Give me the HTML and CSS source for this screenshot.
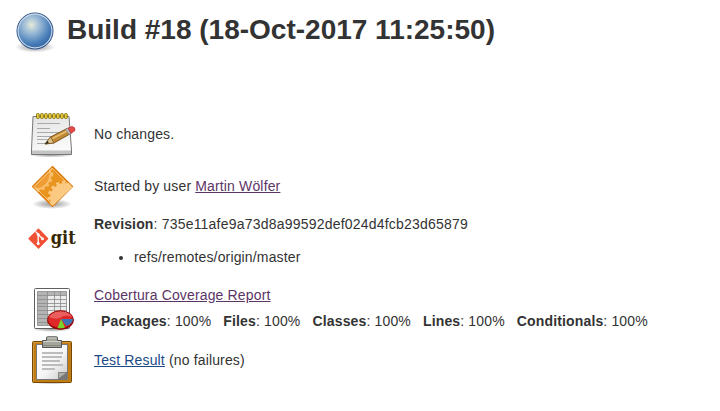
FILE: index.html
```
<!DOCTYPE html>
<html lang="en">
<head>
<meta charset="utf-8">
<title>Build #18</title>
<link rel="stylesheet" href="styles.css">
</head>
<body>
<main>
  <h1 class="title">
    <svg class="ball" viewBox="0 0 48 48">
      <defs>
        <radialGradient id="blue" cx=".4" cy=".33" r=".68"><stop offset="0" stop-color="#e6ebd8"/><stop offset=".3" stop-color="#a3c0d8"/><stop offset=".75" stop-color="#4a7fb9"/><stop offset="1" stop-color="#3465a4"/></radialGradient>
        <radialGradient id="shade"><stop offset="0" stop-color="#000" stop-opacity=".4"/><stop offset=".6" stop-color="#000" stop-opacity=".18"/><stop offset="1" stop-color="#000" stop-opacity="0"/></radialGradient>
      </defs>
      <ellipse cx="24" cy="41" rx="20" ry="5.500" fill="url(#shade)"/>
      <circle cx="24" cy="25" r="18" fill="url(#blue)" stroke="#2b4f84"/>
      <circle cx="24" cy="25" r="16.900" fill="none" stroke="#c9d8e8" stroke-width="1.100"/>
    </svg>
    <span class="title-text">Build #18 (18-Oct-2017 11:25:50)</span>
  </h1>

  <section class="summary">
    <div class="row">
      <svg class="icon" viewBox="0 0 48 48">
        <defs><linearGradient id="paper" x2=".3" y2="1"><stop stop-color="#e2e2e2"/><stop offset="1" stop-color="#fafafa"/></linearGradient></defs>
        <ellipse cx="23" cy="45" rx="22" ry="2.500" fill="url(#shade)"/>
        <path d="M5 6.500H41L43.500 40V44.500H3.500V40Z" fill="url(#paper)" stroke="#777"/>
        <path d="M4 40.500H43V44H4Z" fill="#c4c4c4"/>
        <path d="M9 13.500H32M9 18.500H22M9 22.500H35M9 26.500H30M9 29.500H26M9 33.500H21" stroke="#aaa"/>
        <g fill="#e5ca3c" stroke="#85700c" stroke-width=".9"><rect x="8.500" y="3.500" width="2.800" height="5" rx="1"/><rect x="12.500" y="3.500" width="2.800" height="5" rx="1"/><rect x="16.500" y="3.500" width="2.800" height="5" rx="1"/><rect x="20.500" y="3.500" width="2.800" height="5" rx="1"/><rect x="24.500" y="3.500" width="2.800" height="5" rx="1"/><rect x="28.500" y="3.500" width="2.800" height="5" rx="1"/><rect x="32.500" y="3.500" width="2.800" height="5" rx="1"/><rect x="36.500" y="3.500" width="2.800" height="5" rx="1"/></g>
        <path d="M17 34L22.500 27 39 18.500 42 24 26 33Z" fill="#c08a35" stroke="#6b4310" stroke-width=".8"/>
        <path d="M24.500 28.500L40 20.500" stroke="#e5bd70" stroke-width="1.600"/>
        <path d="M17 34L22.500 27 26 33Z" fill="#dec28d" stroke="#6b4310" stroke-width=".6"/>
        <path d="M17 34L19.500 31 21 33.200Z" fill="#222"/>
        <path d="M37.500 19.500L40 18 43 23.500 41 24.500Z" fill="#bbb" stroke="#777" stroke-width=".5"/>
        <path d="M40 18L44 16.500Q47.500 17 47 20.500L43 23.500Z" fill="#e74c4c" stroke="#a83030" stroke-width=".7"/>
      </svg>
      <div class="text">No changes.</div>
    </div>

    <div class="row">
      <svg class="icon" viewBox="0 0 48 48">
        <defs>
          <clipPath id="diamond"><path d="M24.500 5L44.500 25 24.500 44 4.500 25Z"/></clipPath>
        </defs>
        <ellipse cx="24" cy="42" rx="20" ry="5" fill="url(#shade)"/>
        <path d="M24.500 4.500L44.500 24.500 24.500 44.500 4.500 24.500Z" fill="#e8941f" stroke="#d87914" stroke-width="1.200" stroke-linejoin="round"/>
        <g clip-path="url(#diamond)">
          <circle cx="7" cy="12" r="15" fill="#ef9d33"/>
          <circle cx="7" cy="12" r="15.500" fill="none" stroke="#f9bf6d" stroke-width="2"/>
          <circle cx="7" cy="12" r="17" fill="none" stroke="#f9bf6d" stroke-width="2.500" stroke-dasharray="2.500 3"/>
          <circle cx="37" cy="36" r="15" fill="#fbc981"/>
          <circle cx="37" cy="36" r="16" fill="none" stroke="#fbc981" stroke-width="3" stroke-dasharray="3 3"/>
        </g>
        <path d="M24.500 6.500L42.500 24.500 24.500 42.500 6.500 24.500Z" fill="none" stroke="#ffd494" stroke-width=".8" opacity=".85"/>
      </svg>
      <div class="text">Started by user <a class="visited" href="#">Martin Wölfer</a></div>
    </div>

    <div class="row revision">
      <svg class="icon" viewBox="0 0 48 48">
        <path d="M10 14.700Q10.500 14.400 11 14.700L20 24Q20.500 24.700 20 25.300L11 34.500Q10.500 34.900 10 34.500L.7 25.300Q0 24.700.7 24Z" fill="#f05033"/>
        <path d="M7.500 17.500L10.200 20.200V29.500M10.200 20.500L14.500 24.700" fill="none" stroke="#fff" stroke-width="1.300"/>
        <circle cx="10.200" cy="20.500" r="1.500" fill="#fff"/><circle cx="10.200" cy="29.500" r="1.500" fill="#fff"/><circle cx="14.500" cy="24.700" r="1.500" fill="#fff"/>
        <text class="git" x="22.700" y="29.500" textLength="25" lengthAdjust="spacingAndGlyphs">git</text>
      </svg>
      <div class="text">
        <b>Revision</b>: <span class="hash">735e11afe9a73d8a99592def024d4fcb23d65879</span>
        <ul><li>refs/remotes/origin/master</li></ul>
      </div>
    </div>

    <div class="row coverage">
      <svg class="icon" viewBox="0 0 48 48">
        <ellipse cx="24" cy="45" rx="20" ry="3" fill="url(#shade)"/>
        <rect x="6.500" y="4.500" width="35" height="40" rx="1" fill="#fff" stroke="#606060"/>
        <rect x="9.500" y="7.500" width="29" height="34" fill="#ececec"/>
        <path d="M9.500 7.500H38.500V11.500H19.500V41.500H9.500Z" fill="#b4b4b4"/>
        <path d="M9.500 7.500H38.500V41.500H9.500ZM19.500 7.500V41.500M26.500 7.500V41.500M32.500 7.500V41.500M9.500 11.500H38.500M9.500 15.500H38.500M9.500 19.500H38.500M9.500 22.500H38.500M9.500 26.500H38.500M9.500 30.500H38.500M9.500 34.500H38.500M9.500 38.500H38.500" fill="none" stroke="#8a8a8a" stroke-width=".8"/>
        <ellipse cx="32.500" cy="36.500" rx="13" ry="9.200" fill="#a40000"/>
        <ellipse cx="32.500" cy="35" rx="12.600" ry="8.700" fill="#df2828"/>
        <path d="M21 33Q24 27 33 27T44 33Q37 30 32 34 27 36 21 33" fill="#f17474" opacity=".7"/>
        <path d="M33 35H45.200Q45 39.500 38.500 42Z" fill="#3d72b4"/>
        <path d="M33 35L37 43.500Q33 45 29.500 44Z" fill="#79d62d"/>
        <ellipse cx="32.500" cy="36" rx="13" ry="9.200" fill="none" stroke="#870b0b" stroke-width=".8"/>
      </svg>
      <div class="text">
        <a class="visited" href="#">Cobertura Coverage Report</a>
        <div class="metrics"><span><b>Packages</b>: 100%</span><span><b>Files</b>: 100%</span><span><b>Classes</b>: 100%</span><span><b>Lines</b>: 100%</span><span><b>Conditionals</b>: 100%</span></div>
      </div>
    </div>

    <div class="row">
      <svg class="icon" viewBox="0 0 48 48">
        <defs><linearGradient id="sheet" x2="1" y2="1"><stop stop-color="#fff"/><stop offset=".55" stop-color="#f5f5f5"/><stop offset="1" stop-color="#c8c8c8"/></linearGradient></defs>
        <ellipse cx="24" cy="46" rx="20" ry="2.500" fill="url(#shade)"/>
        <rect x="4.500" y="5.500" width="39" height="41" rx="1" fill="#c17d11" stroke="#754806"/>
        <path d="M5.500 45V6.500H42.500" fill="none" stroke="#dda14b" stroke-width=".7"/>
        <path d="M8.500 8.500H39.500V43.500H8.500Z" fill="url(#sheet)" stroke="#777"/>
        <path d="M30.500 43V36.500H39V43Z" fill="#777"/>
        <path d="M30.500 43V36.500H39Z" fill="#aeb1aa" stroke="#666" stroke-width=".6"/>
        <path d="M14 17H35M14 21H34M14 25H32M14 29H35M14 33H27" stroke="#bcbcbc" stroke-width="1.800"/>
        <path d="M14.500 4.500H18.500V1.500Q18.500.8 19.500.8H28.500Q29.500.8 29.500 1.500V4.500H33.500V11.500H14.500Z" fill="#a4a69b" stroke="#555"/>
        <path d="M15.500 5.500H32.500M19.500 2H28.500" stroke="#d0d1ca"/>
        <path d="M15 9.500H33" stroke="#85877e"/>
      </svg>
      <div class="text"><a href="#">Test Result</a> (no failures)</div>
    </div>
  </section>
</main>
</body>
</html>
```
FILE: styles.css
```
body {
  margin: 0;
  background: #fff;
  color: #333;
  font: 14px/20px "Liberation Sans", Arial, sans-serif;
}
main { padding: 6px 0 0 11px; }
.title {
  display: flex;
  align-items: center;
  gap: 8px;
  height: 48px;
  margin: 0;
  font-size: 28px;
  line-height: 40px;
}
.ball, .icon { display: block; width: 48px; height: 48px; flex: none; overflow: visible; }
.summary {
  display: grid;
  gap: 4px;
  margin: 56px 0 0 17px;
}
.row { display: flex; align-items: center; gap: 18px; min-height: 48px; }
.text { white-space: nowrap; letter-spacing: .15px; }
.row.revision { align-items: flex-start; height: 66px; }
a { color: #204a87; }
a.visited { color: #5c3566; }
.hash { letter-spacing: .21px; }
ul { margin: 13px 0 0; padding-left: 40px; }
.coverage { height: 48px; }
.coverage .text { padding-bottom: 1px; }
.metrics { display: flex; gap: 12px; padding: 6px 0 0 7px; }
.git { font: bold 18px "DejaVu Serif", serif; fill: #362701; }
```
